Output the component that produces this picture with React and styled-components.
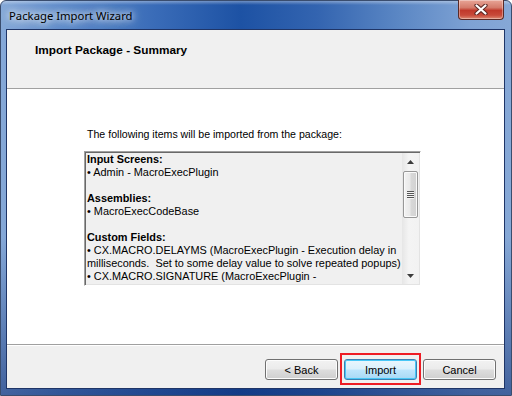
import React from 'react';
import styled, { createGlobalStyle } from 'styled-components';

const GlobalStyle = createGlobalStyle`
  html, body {
    margin: 0;
    padding: 0;
    background: #ffffff;
  }
  body {
    width: 512px;
    height: 396px;
    overflow: hidden;
    font-family: "Liberation Sans", Arial, sans-serif;
  }
`;

const Window = styled.div`
  width: 512px;
  height: 396px;
  box-sizing: border-box;
  display: flex;
  flex-direction: column;
  padding: 0 6px 6px 5px;
  border: 1px solid #3a4d6e;
  border-radius: 6px 6px 0 0;
  background:
    linear-gradient(180deg, rgba(255,255,255,0.35) 0px, rgba(255,255,255,0) 4px),
    linear-gradient(180deg, rgba(0,0,0,0) 60%, rgba(10,40,110,0.55) 100%),
    linear-gradient(90deg, #86a9d8 0%, #5e8cca 12%, #3a6cb8 30%, #1d52a4 47%, #3364b0 62%, #5b87c4 78%, #7ea2d4 92%, #86a8d6 100%);
`;

const TitleBar = styled.div`
  height: 28px;
  display: flex;
  align-items: center;
  justify-content: space-between;
  padding-left: 2px;
`;

const Caption = styled.span`
  font-family: "Noto Sans", "Open Sans", sans-serif;
  font-size: 11.3px;
  color: #000;
  padding: 0 4px 0 1px;
  text-shadow: 0 0 6px rgba(255,255,255,0.95), 0 0 10px rgba(255,255,255,0.8), 0 0 14px rgba(255,255,255,0.6);
`;

const CloseButton = styled.div`
  align-self: flex-start;
  margin-top: -1px;
  margin-right: 1px;
  width: 46px;
  height: 20px;
  box-sizing: border-box;
  border: 1px solid #5a2a26;
  border-top: none;
  border-radius: 0 0 4px 4px;
  display: flex;
  align-items: center;
  justify-content: center;
  background: linear-gradient(180deg, #e8a597 0%, #d47b6b 40%, #c0392b 55%, #c84a3a 80%, #dc8a72 100%);
  box-shadow: inset 0 0 0 1px rgba(255,255,255,0.35);
`;

const Client = styled.div`
  flex: 1;
  display: flex;
  flex-direction: column;
  border: 1px solid #1f3567;
  background: #f0f0f0;
  min-height: 0;
`;

const Header = styled.div`
  height: 59px;
  box-sizing: border-box;
  padding: 13px 0 0 28px;
  border-bottom: 1px solid #a0a0a0;
  background: #f0f0f0;
`;

const HeaderTitle = styled.div`
  font-weight: bold;
  font-size: 11.8px;
  line-height: 14px;
  color: #000;
`;

const Body = styled.div`
  flex: 1;
  background: #ffffff;
  padding: 39px 0 0 77px;
  min-height: 0;
`;

const Label = styled.div`
  font-size: 10.6px;
  line-height: 13px;
  color: #000;
  padding-left: 3px;
  margin-bottom: 10px;
`;

const ListBox = styled.div`
  width: 337px;
  height: 135px;
  box-sizing: border-box;
  display: flex;
  border: 1px solid;
  border-color: #a0a0a0 #ffffff #ffffff #a0a0a0;
  box-shadow: inset 1px 1px 0 #696969, inset -1px -1px 0 #e3e3e3;
  padding: 1px;
  background: #f0f0f0;
  overflow: hidden;
`;

const ListContent = styled.div`
  flex: 1;
  padding-left: 1px;
  overflow: hidden;
  font-size: 10.9px;
  line-height: 13px;
  color: #000;
  white-space: pre;
`;

const Line = styled.div`
  height: 13px;
  font-weight: ${({ $bold }) => ($bold ? 'bold' : 'normal')};
`;

const ScrollBar = styled.div`
  width: 17px;
  display: flex;
  flex-direction: column;
  background: linear-gradient(90deg, #e6e6e6 0%, #f4f4f4 40%, #f2f2f2 100%);
`;

const Arrow = styled.div`
  height: 17px;
  display: flex;
  align-items: center;
  justify-content: center;
`;

const Track = styled.div`
  flex: 1;
  padding-top: 1px;
  display: flex;
  justify-content: center;
`;

const Thumb = styled.div`
  width: 15px;
  height: 47px;
  box-sizing: border-box;
  border: 1px solid #979797;
  border-radius: 2px;
  display: flex;
  flex-direction: column;
  align-items: center;
  justify-content: center;
  gap: 1px;
  background: linear-gradient(90deg, #f3f3f3 0%, #e9e9e9 45%, #d8d8d8 55%, #d2d2d2 100%);
  box-shadow: inset 0 0 0 1px #fafafa;
`;

const Grip = styled.span`
  width: 7px;
  height: 1px;
  background: #555;
  box-shadow: 0 1px 0 #f4f4f4;
`;

const Footer = styled.div`
  height: 44px;
  box-sizing: border-box;
  border-top: 1px solid #a0a0a0;
  box-shadow: inset 0 1px 0 #ffffff;
  display: flex;
  justify-content: flex-end;
  align-items: flex-start;
  gap: 6px;
  padding: 14px 8px 0 0;
`;

const Button = styled.button`
  position: relative;
  width: 73px;
  height: 21px;
  box-sizing: border-box;
  padding: 0;
  border-radius: 3px;
  font-family: "Liberation Sans", Arial, sans-serif;
  font-size: 11px;
  color: #000;
  border: 1px solid ${({ $default }) => ($default ? '#3c7fb1' : '#707070')};
  background: ${({ $default }) =>
    $default
      ? 'linear-gradient(180deg, #eaf6fd 0%, #d9f0fc 48%, #bee6fd 52%, #a7d9f5 100%)'
      : 'linear-gradient(180deg, #f2f2f2 0%, #ebebeb 48%, #dddddd 52%, #cfcfcf 100%)'};
  box-shadow: inset 0 0 0 1px ${({ $default }) => ($default ? '#48c7f6' : '#fcfcfc')};

  ${({ $marked }) =>
    $marked &&
    `&::after {
      content: '';
      position: absolute;
      left: -5px;
      right: -5px;
      top: -7px;
      bottom: -6px;
      border: 2px solid #ee1c24;
      pointer-events: none;
    }`}
`;

const Triangle = ({ down }) => (
  <svg width="7" height="4" viewBox="0 0 7 4">
    <path d={down ? 'M0 0 H7 L3.5 4 Z' : 'M0 4 H7 L3.5 0 Z'} fill="#3c3c3c" />
  </svg>
);

const CloseGlyph = () => (
  <svg width="14" height="11" viewBox="0 0 14 11">
    <path d="M2.5 1.5 L11.5 9.5 M11.5 1.5 L2.5 9.5" stroke="#5b2723" strokeWidth="4.2" strokeLinecap="round" />
    <path d="M2.5 1.5 L11.5 9.5 M11.5 1.5 L2.5 9.5" stroke="#ffffff" strokeWidth="2.2" strokeLinecap="round" />
  </svg>
);

const items = [
  { text: 'Input Screens:', bold: true },
  { text: '• Admin - MacroExecPlugin' },
  { text: '' },
  { text: 'Assemblies:', bold: true },
  { text: '• MacroExecCodeBase' },
  { text: '' },
  { text: 'Custom Fields:', bold: true },
  { text: '• CX.MACRO.DELAYMS (MacroExecPlugin - Execution delay in' },
  { text: 'milliseconds.  Set to some delay value to solve repeated popups)' },
  { text: '• CX.MACRO.SIGNATURE (MacroExecPlugin -' },
];

export default function App() {
  return (
    <>
      <GlobalStyle />
      <Window>
        <TitleBar>
          <Caption>Package Import Wizard</Caption>
          <CloseButton>
            <CloseGlyph />
          </CloseButton>
        </TitleBar>
        <Client>
          <Header>
            <HeaderTitle>Import Package - Summary</HeaderTitle>
          </Header>
          <Body>
            <Label>The following items will be imported from the package:</Label>
            <ListBox>
              <ListContent>
                {items.map((item, i) => (
                  <Line key={i} $bold={item.bold}>
                    {item.text}
                  </Line>
                ))}
              </ListContent>
              <ScrollBar>
                <Arrow>
                  <Triangle />
                </Arrow>
                <Track>
                  <Thumb>
                    <Grip />
                    <Grip />
                    <Grip />
                    <Grip />
                  </Thumb>
                </Track>
                <Arrow>
                  <Triangle down />
                </Arrow>
              </ScrollBar>
            </ListBox>
          </Body>
          <Footer>
            <Button>&lt; Back</Button>
            <Button $default $marked>
              Import
            </Button>
            <Button>Cancel</Button>
          </Footer>
        </Client>
      </Window>
    </>
  );
}
